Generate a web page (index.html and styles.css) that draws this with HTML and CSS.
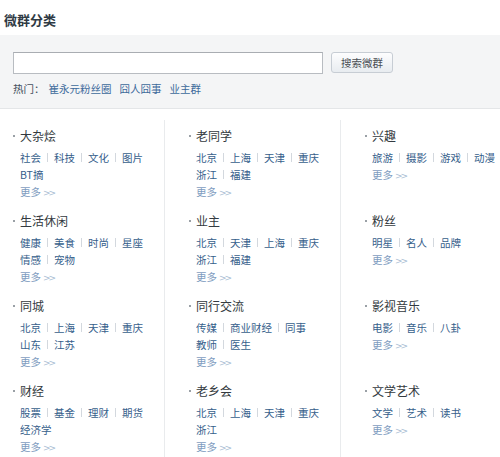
FILE: index.html
```html
<!DOCTYPE html>
<html lang="zh">
<head>
<meta charset="utf-8">
<title>微群分类</title>
<link rel="stylesheet" href="styles.css">
</head>
<body>
<div class="page">
  <div class="header">微群分类</div>
  <div class="search">
    <div class="search-row">
      <input class="search-input" type="text">
      <button class="search-btn" type="button">搜索微群</button>
    </div>
    <div class="hot">
      <span class="hot-label">热门：</span>
      <a class="hot-link">崔永元粉丝圈</a>
      <a class="hot-link">囧人囧事</a>
      <a class="hot-link">业主群</a>
    </div>
  </div>
  <div class="columns">
    <div class="col col-first">
      <div class="sec">
        <div class="sec-title">大杂烩</div>
        <div class="links"><ul><li>社会</li><li>科技</li><li>文化</li><li>图片</li><li>BT摘</li></ul></div>
        <div class="more">更多<span class="arr">&gt;&gt;</span></div>
      </div>
      <div class="sec">
        <div class="sec-title">生活休闲</div>
        <div class="links"><ul><li>健康</li><li>美食</li><li>时尚</li><li>星座</li><li>情感</li><li>宠物</li></ul></div>
        <div class="more">更多<span class="arr">&gt;&gt;</span></div>
      </div>
      <div class="sec">
        <div class="sec-title">同城</div>
        <div class="links"><ul><li>北京</li><li>上海</li><li>天津</li><li>重庆</li><li>山东</li><li>江苏</li></ul></div>
        <div class="more">更多<span class="arr">&gt;&gt;</span></div>
      </div>
      <div class="sec">
        <div class="sec-title">财经</div>
        <div class="links"><ul><li>股票</li><li>基金</li><li>理财</li><li>期货</li><li>经济学</li></ul></div>
        <div class="more">更多<span class="arr">&gt;&gt;</span></div>
      </div>
    </div>
    <div class="col col-mid">
      <div class="sec">
        <div class="sec-title">老同学</div>
        <div class="links"><ul><li>北京</li><li>上海</li><li>天津</li><li>重庆</li><li>浙江</li><li>福建</li></ul></div>
        <div class="more">更多<span class="arr">&gt;&gt;</span></div>
      </div>
      <div class="sec">
        <div class="sec-title">业主</div>
        <div class="links"><ul><li>北京</li><li>天津</li><li>上海</li><li>重庆</li><li>浙江</li><li>福建</li></ul></div>
        <div class="more">更多<span class="arr">&gt;&gt;</span></div>
      </div>
      <div class="sec">
        <div class="sec-title">同行交流</div>
        <div class="links"><ul><li>传媒</li><li>商业财经</li><li>同事</li><li>教师</li><li>医生</li></ul></div>
        <div class="more">更多<span class="arr">&gt;&gt;</span></div>
      </div>
      <div class="sec">
        <div class="sec-title">老乡会</div>
        <div class="links"><ul><li>北京</li><li>上海</li><li>天津</li><li>重庆</li><li>浙江</li></ul></div>
        <div class="more">更多<span class="arr">&gt;&gt;</span></div>
      </div>
    </div>
    <div class="col col-last">
      <div class="sec">
        <div class="sec-title">兴趣</div>
        <div class="links"><ul><li>旅游</li><li>摄影</li><li>游戏</li><li>动漫</li></ul></div>
        <div class="more">更多<span class="arr">&gt;&gt;</span></div>
      </div>
      <div class="sec">
        <div class="sec-title">粉丝</div>
        <div class="links"><ul><li>明星</li><li>名人</li><li>品牌</li></ul></div>
        <div class="more">更多<span class="arr">&gt;&gt;</span></div>
      </div>
      <div class="sec">
        <div class="sec-title">影视音乐</div>
        <div class="links"><ul><li>电影</li><li>音乐</li><li>八卦</li></ul></div>
        <div class="more">更多<span class="arr">&gt;&gt;</span></div>
      </div>
      <div class="sec">
        <div class="sec-title">文学艺术</div>
        <div class="links"><ul><li>文学</li><li>艺术</li><li>读书</li></ul></div>
        <div class="more">更多<span class="arr">&gt;&gt;</span></div>
      </div>
    </div>
  </div>
</div>
</body>
</html>
```

FILE: styles.css
```css
html, body {
  margin: 0;
  padding: 0;
  background: #ffffff;
}
body {
  font-family: "Noto Sans CJK SC", "Noto Sans", sans-serif;
  overflow: hidden;
}
.page {
  width: 500px;
  height: 457px;
  overflow: hidden;
}
.header {
  padding: 10px 0 5px 4px;
  line-height: 20px;
  font-size: 13px;
  font-weight: bold;
  color: #2f3a44;
}
.search {
  background: #f4f5f6;
  border-bottom: 1px solid #e4e6e8;
  padding: 17px 13px 11px 13px;
}
.search-row {
  display: flex;
  align-items: flex-start;
}
.search-input {
  box-sizing: border-box;
  width: 310px;
  height: 22px;
  margin: 0;
  border: 1px solid #b8bcc1;
  border-top-color: #a9adb2;
  background: #ffffff;
  padding: 0 4px;
}
.search-btn {
  box-sizing: border-box;
  width: 62px;
  height: 21px;
  margin: 0 0 0 8px;
  padding: 0;
  border: 1px solid #c7cdd4;
  border-radius: 3px;
  background: linear-gradient(#fdfdfe, #e8ecf0);
  font-family: "Noto Sans CJK SC", sans-serif;
  font-size: 10.5px;
  line-height: 19px;
  color: #4a4f55;
}
.hot {
  margin-top: 7px;
  line-height: 16px;
  font-size: 10.5px;
  display: flex;
}
.hot-label {
  color: #44515e;
}
.hot-link {
  color: #3d6a9b;
  margin-left: 8px;
}
.hot-label + .hot-link {
  margin-left: 4px;
}
.columns {
  display: flex;
  margin-top: 11px;
  width: 560px;
}
.col {
  box-sizing: border-box;
  padding-top: 6px;
  height: 340px;
}
.col-first {
  width: 165px;
  padding-left: 13px;
  border-right: 1px solid #e9ebed;
}
.col-mid {
  width: 176px;
  padding-left: 24px;
  padding-right: 6px;
  border-right: 1px solid #e9ebed;
}
.col-last {
  width: 210px;
  padding-left: 24px;
}
.sec {
  height: 85px;
}
.sec-title {
  display: flex;
  align-items: center;
  font-size: 12px;
  line-height: 20px;
  color: #333a40;
}
.sec-title::before {
  content: "";
  width: 2px;
  height: 2px;
  background: #9aa0a6;
  margin-right: 5px;
}
.links {
  margin: 3px 0 0 7px;
  overflow: hidden;
}
.links ul {
  list-style: none;
  margin: 0 0 0 -13px;
  padding: 0;
  display: flex;
  flex-wrap: wrap;
}
.links li {
  display: flex;
  align-items: center;
  margin-left: 6px;
  font-size: 10.5px;
  line-height: 17px;
  color: #36608b;
}
.links li::before {
  content: "";
  width: 1px;
  height: 9px;
  background: #d3d8de;
  margin-right: 6px;
}
.more {
  margin-left: 7px;
  font-size: 10.5px;
  line-height: 17px;
  color: #7f9dbf;
}
.arr {
  margin-left: 2px;
  letter-spacing: -2px;
  font-family: "DejaVu Sans", sans-serif;
  font-size: 9px;
  color: #a9bdd3;
}
```
